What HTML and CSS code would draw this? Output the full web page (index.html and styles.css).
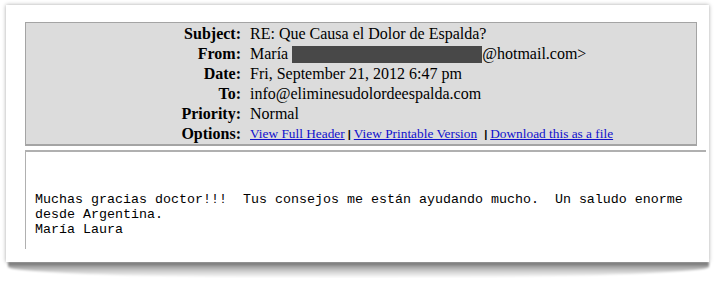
FILE: index.html
```html
<!DOCTYPE html>
<html lang="es">
<head>
  <meta charset="UTF-8">
  <title>RE: Que Causa el Dolor de Espalda?</title>
  <link rel="stylesheet" href="styles.css">
</head>
<body>
  <div class="paper">
    <div class="sheet">
      <!-- Message header -->
      <div class="header">
        <div class="label">Subject:</div>
        <div class="value">RE: Que Causa el Dolor de Espalda?</div>

        <div class="label">From:</div>
        <div class="value">María <span class="redacted"></span>@hotmail.com&gt;</div>

        <div class="label">Date:</div>
        <div class="value">Fri, September 21, 2012 6:47 pm</div>

        <div class="label">To:</div>
        <div class="value">info@eliminesudolordeespalda.com</div>

        <div class="label">Priority:</div>
        <div class="value">Normal</div>

        <div class="label">Options:</div>
        <div class="value options">
          <a href="#">View Full Header</a><span class="sep">|</span><a href="#">View Printable Version</a><span class="sep wide">|</span><a href="#">Download this as a file</a>
        </div>
      </div>

      <!-- Message body -->
      <div class="message">
        <pre>Muchas gracias doctor!!!  Tus consejos me están ayudando mucho.  Un saludo enorme
desde Argentina.
María Laura</pre>
      </div>
    </div>
    <div class="curl"></div>
  </div>
</body>
</html>
```

FILE: styles.css
```css
body {
  margin: 0;
  background: #ffffff;
  font-family: "Liberation Serif", "Times New Roman", serif;
  color: #000;
}

.paper {
  position: relative;
  margin: 5px 9px 0 6px;
}

.sheet {
  position: relative;
  z-index: 1;
  height: 257px;
  background: #ffffff;
  box-shadow: 0 0 4px rgba(0, 0, 0, 0.35);
  overflow: hidden;
  padding: 17px 0 0 19px;
  box-sizing: border-box;
}

/* curled shadow under the sheet */
.curl {
  height: 16px;
  margin: 0 0 0 2px;
  background: linear-gradient(to bottom, rgba(0, 0, 0, 0.55), rgba(0, 0, 0, 0.2) 55%, rgba(0, 0, 0, 0));
  border-radius: 0 0 50% 50% / 0 0 70% 70%;
  filter: blur(1px);
}

.header {
  width: 670px;
  background: #dcdcdc;
  border: 1px solid #a4a4a4;
  border-bottom-width: 2px;
  padding: 1px 0 0 0;
  display: grid;
  grid-template-columns: 215px 1fr;
  column-gap: 9px;
  font-size: 16px;
  line-height: 20px;
}

.label {
  font-weight: bold;
  text-align: right;
}

.redacted {
  display: inline-block;
  width: 190px;
  height: 17px;
  background: #484848;
  vertical-align: -4px;
}

.options {
  font-size: 13.333px;
}

.options a {
  color: #1010cc;
}

.sep {
  font-family: "Liberation Sans", Arial, sans-serif;
  font-size: 11px;
  font-weight: bold;
  margin: 0 3px 0 3px;
}

.sep.wide {
  margin-left: 7px;
}

.message {
  margin-top: 4px;
  width: 671px;
  height: 57px;
  border-top: 2px solid #b0b0b0;
  border-left: 1px solid #b0b0b0;
  padding: 40px 0 0 9px;
}

.message pre {
  margin: 0;
  font-family: "Liberation Mono", "Courier New", monospace;
  font-size: 13.333px;
  line-height: 15px;
}
```
